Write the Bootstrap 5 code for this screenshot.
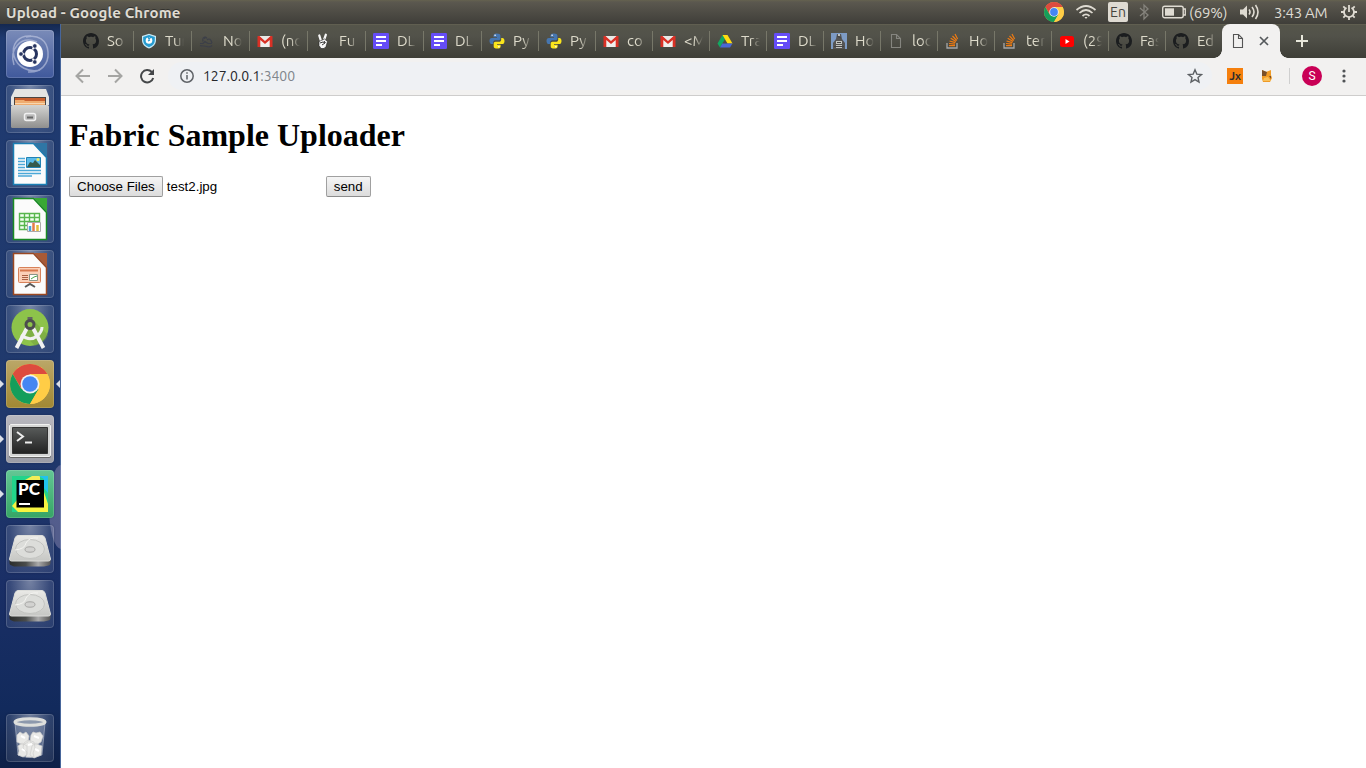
<!DOCTYPE html>
<html lang="en">
<head>
<meta charset="utf-8">
<title>Upload</title>
<link rel="stylesheet" href="https://cdn.jsdelivr.net/npm/bootstrap@5.3.0/dist/css/bootstrap.min.css">
<style>
body{font-family:Ubuntu,"Noto Sans",sans-serif;font-size:15px;line-height:1;overflow:hidden;background:#fff}
svg{display:block;flex:none}
.panel{height:24px;background:linear-gradient(#65624f 0,#5b584f 2px,#3f3e39);color:#dfdbd2;padding:0 6px}
.panel-title{font-weight:700;font-size:15px;letter-spacing:.15px;text-shadow:0 -1px #33322e;white-space:nowrap}
.panel .lang{width:20px;height:20px;background:#dfdbd2;color:#45443f;border-radius:2px;font-size:14px}
.launcher{width:61px;padding:6px 0 6px 6px;background:linear-gradient(#142850 0,#1f3a70 14px,#20396c 55%,#1a2f66 75%,#122a5c 92%,#0e2047);border-right:1px solid #47669b;gap:7px}
.glow{left:49px;top:441px;width:12px;height:84px;border-radius:12px 0 0 12px/42px 0 0 42px;background:#9a93bb70}
.tile{width:48px;height:48px;border-radius:4px;background:radial-gradient(ellipse at 50% 0,#ffffff66,#ffffff20 60%,#ffffff14);box-shadow:inset 0 0 0 1px #ffffff28,0 0 2px #0a173870}
.tile.dash{background:linear-gradient(#7a8bb8,#40599c)}
.tile.gold{background:linear-gradient(#bba768,#a18833)}
.tile.silver{background:linear-gradient(#b8b8be,#9b9ca5)}
.tile.green{background:linear-gradient(#63c795,#36a565)}
.pip{top:20px;width:0;height:0;border:4px solid transparent}
.pip-l{left:-6px;border-left-color:#dce0e8;border-right:0}
.pip-r{right:-6px;border-right-color:#dce0e8;border-left:0}
.strip{height:34px;padding-left:14px;background:linear-gradient(#6b6857 0,#55554a 1px,#52524a 12px,#3e3e37)}
.tab{width:57px;height:34px;padding-left:8px;gap:8px;position:relative}
.tab.wide{width:58px}
.tab::after{content:"";width:1px;height:20px;background:#777769;position:absolute;right:-1px;top:7px;z-index:1}
.tab.last::after{display:none}
.tab span{width:19px;overflow:hidden;white-space:nowrap;line-height:20px;color:#dedbcb;-webkit-mask-image:linear-gradient(90deg,#000 50%,transparent);mask-image:linear-gradient(90deg,#000 50%,transparent)}
.tab-on{width:58px;height:34px;background:#f2f1f0;border-radius:8px 8px 0 0;padding:0 9px 0 8px;position:relative}
.tab-on::before,.tab-on::after{content:"";position:absolute;bottom:0;width:8px;height:8px}
.tab-on::before{left:-8px;background:radial-gradient(circle at 0 0,transparent 7.5px,#f2f1f0 8px)}
.tab-on::after{right:-8px;background:radial-gradient(circle at 100% 0,transparent 7.5px,#f2f1f0 8px)}
.toolbar{height:38px;background:#f2f1f0;border-bottom:1px solid #cecdcc;padding:0 14px 1px}
.omni{height:28px;margin-left:13px;width:1044px;border-radius:14px;background:#eff1f4;padding:0 9px 0 12px}
.url{font-size:14px;letter-spacing:-.05px;color:#25272b;margin-left:9px;line-height:20px}
.url i{font-style:normal;color:#80868b}
.jx{width:16px;height:16px;background:#f57f0c;color:#2b2b2b;font-size:11px;font-weight:700}
.avatar{width:20px;height:20px;background:#c90056;color:#fff;font:12px Roboto,sans-serif}
.page{padding:21px 8px;color:#000}
.page h1{font:bold 32px/37px "Liberation Serif",serif;margin:0 0 22px}
.frm{font:13.333px/15px "Liberation Sans",sans-serif;height:21px}
.old{height:21px;padding:0 7px;border:1px solid #a0a0a0;border-bottom-color:#8c8c8c;border-radius:2px;background:linear-gradient(#f5f5f5,#dcdcdc);font:inherit;color:#000}
.fname{width:159px;padding-left:4px}
</style>
</head>
<body class="vh-100 d-flex flex-column">
<svg width="0" height="0" class="position-absolute">
<defs>
<linearGradient id="hdd" x1="0" y1="0" x2="0" y2="1"><stop stop-color="#e9e9e6"/><stop offset="1" stop-color="#c6c7c4"/></linearGradient>
<linearGradient id="scr" x1="0" y1="0" x2="0" y2="1"><stop stop-color="#585b5a"/><stop offset="1" stop-color="#222"/></linearGradient>
<linearGradient id="cab" x1="0" y1="0" x2="0" y2="1"><stop stop-color="#d4d4d2"/><stop offset="1" stop-color="#8f8f8e"/></linearGradient>
<linearGradient id="edge"><stop stop-color="#2b2d2c"/><stop offset=".4" stop-color="#4a4c4b"/><stop offset=".7" stop-color="#aaa"/><stop offset="1" stop-color="#555"/></linearGradient>
<symbol id="github" viewBox="0 0 16 16"><path fill="#1b1d1f" d="M8 0C3.58 0 0 3.58 0 8c0 3.54 2.29 6.53 5.47 7.59.4.07.55-.17.55-.38 0-.19-.01-.82-.01-1.49-2.01.37-2.53-.49-2.69-.94-.09-.23-.48-.94-.82-1.13-.28-.15-.68-.52-.01-.53.63-.01 1.08.58 1.23.82.72 1.21 1.87.87 2.33.66.07-.52.28-.87.51-1.07-1.78-.2-3.64-.89-3.64-3.95 0-.87.31-1.59.82-2.15-.08-.2-.36-1.02.08-2.12 0 0 .67-.21 2.2.82.64-.18 1.32-.27 2-.27s1.36.09 2 .27c1.53-1.04 2.2-.82 2.2-.82.44 1.1.16 1.92.08 2.12.51.56.82 1.27.82 2.15 0 3.07-1.87 3.75-3.65 3.95.29.25.54.73.54 1.48 0 1.07-.01 1.93-.01 2.2 0 .21.15.46.55.38A8 8 0 0 0 16 8c0-4.42-3.58-8-8-8"/></symbol>
<symbol id="shield" viewBox="0 0 16 16"><path fill="#c8e9f5" d="M8 .7 15 3v4c0 4.500-3 7-7 8.500C4 14 1 11.500 1 7V3z"/><path fill="#259bd0" d="M8 2l5.800 2v3c0 3.600-2.400 5.700-5.800 7.200C4.600 12.700 2.200 10.600 2.200 7V4z"/><circle cx="8" cy="7.500" r="3.300" fill="#fff"/><path d="m7 4 1 2 2-2M7 8l2-1" stroke="#259bd0" stroke-width="1.300" fill="none"/></symbol>
<symbol id="bird" viewBox="0 0 16 16"><path d="M1 12.500c2 1 5 0 7 1s4 0 5-1M4 8.500c-1-4 2-6 4-3M8 7c2-2 4-1 5 3M1 10.500h3l2-2 3 2h4M5 4l1 2" fill="none" stroke="#3c3f48" stroke-width="1.200"/></symbol>
<symbol id="gmail" viewBox="0 0 16 16"><path fill="#efefed" d="M1 3h14v11H1z"/><path fill="#d93025" d="M1 3h1.500L8 8l5.500-5H15a.5.500 0 0 1 .5.500V14H12.700V7L8 11 3.300 7v7H.5V3.500A.5.500 0 0 1 1 3"/><path fill="#e8e8e6" d="M3.300 2.900h9.400L8 7.200z"/></symbol>
<symbol id="victory" viewBox="0 0 16 16"><path d="M6 8 4.300 2.500M8.800 7.500 10.800 1.800" stroke="#f7f7f7" stroke-width="2.300" stroke-linecap="round"/><path fill="#f7f7f7" stroke="#222" stroke-width=".6" d="M4 8.500 9.500 6l3 2.500-1.500 5-2 2H6l-2-3z"/><path d="m5 10 3-1 2 1-3 2M9 8l1.500 2" fill="none" stroke="#222" stroke-width=".9"/></symbol>
<symbol id="doc" viewBox="0 0 16 16"><rect width="16" height="16" rx="1.300" fill="#654cf7"/><path d="M3 4h10M3 8h10M3 12h6" stroke="#fff" stroke-width="2"/></symbol>
<symbol id="python" viewBox="0 0 16 16"><path fill="#4676b0" d="M7.700.4C5 .4 4.500 1.500 4.500 2.600v1.700H8v.6H2.900C1.300 4.900.5 6.100.5 8s1 3.100 2.200 3.100h1.500V9.300c0-1.200 1-2 2-2h3.500c1 0 1.700-.8 1.700-1.700v-3C11.400 1.100 10.200.4 7.700.4"/><circle cx="6.100" cy="2.300" r=".8" fill="#fff"/><path fill="#fbe51c" d="M8.300 15.600c2.700 0 3.300-1.100 3.300-2.200v-1.700H8v-.6h5.200c1.500 0 2.300-1.200 2.300-3.100s-.9-3.100-2.200-3.100h-1.100v1.800c0 1.200-1 2.100-2 2.100H6.400c-1 0-1.700.8-1.700 1.700v3c0 1.400 1.200 2.100 3.600 2.100"/><circle cx="9.900" cy="13.700" r=".8" fill="#fff"/></symbol>
<symbol id="drive" viewBox="0 0 16 16"><path fill="#11a861" d="M5.500 2 .5 10.600 3 14.500 8 6z"/><path fill="#ffdc10" d="M5.500 2h5l5 8.500h-5z"/><path fill="#4968d5" d="M5.300 10.500h10.200L13 14.500H3z"/></symbol>
<symbol id="photo" viewBox="0 0 16 16"><path fill="#7d9bc5" d="M0 0h16v16H0z"/><path fill="#555" d="M6 1h4l1 5 3 4v6H2v-6l3-4z"/><path fill="#c2c4c0" d="M7 1h2v2H7zM5 8h6v3H5zm0 4h6v3H5z"/><path stroke="#444" d="M6 3l4 2M6 9.500h4M3 13.500h10"/></symbol>
<symbol id="file" viewBox="0 0 16 16"><path d="M3.500 1.500h5l4 4v9h-9zM8.500 1.500v4h4" fill="none" stroke="currentColor" stroke-width="1.100"/></symbol>
<symbol id="stack" viewBox="0 0 16 16"><path d="M2 10v5h10v-5" fill="none" stroke="#a5a7a8" stroke-width="1.300"/><path d="M4 12.700h6M4 10.500l6 .7M4.500 8l5.900 1.700M5.700 5.300 11 8.400M7.500 3l4.300 4.500M10 1l2.600 5" stroke="#ef7b12" stroke-width="1.200"/></symbol>
<symbol id="yt" viewBox="0 0 16 16"><rect x="1" y="3" width="14" height="11" rx="2.500" fill="#f00"/><path fill="#fff" d="m6.500 6 4 2.500-4 2.500z"/></symbol>
<symbol id="chrome" viewBox="0 0 48 48"><circle cx="24" cy="24" r="20" fill="#ffcd46"/><path fill="#dd4b3e" d="M24 14h17.300A20 20 0 0 0 6.700 14L15.500 29z"/><path fill="#149e5b" d="M6.700 14A20 20 0 0 0 24 44l8.700-15H15.300z"/><path fill="#ffcd46" d="M24 44a20 20 0 0 0 17.300-30H24l8.700 15z"/><circle cx="24" cy="24" r="9.500" fill="#f1f1f1"/><circle cx="24" cy="24" r="7.800" fill="#4586f2"/></symbol>
<symbol id="disk" viewBox="0 0 48 48"><path fill="url(#edge)" d="M3.500 34h41v4q0 2-2 2.500L38 41.500H8L4.500 40q-1-.5-1-2z"/><path fill="url(#hdd)" stroke="#dcddda" d="M12 10.500h24q2 0 3 2.500l5.500 21q0 2-2 2h-37q-2 0-2-2L9 13q1-2.500 3-2.500"/><ellipse cx="24" cy="24" rx="14.500" ry="9.500" fill="#dcddda" stroke="#c3c4c1"/><ellipse cx="24" cy="24.500" rx="5" ry="2.700" fill="#d2d2d0" stroke="#a5a5a3"/><path d="M9 25q10-1 11-7 3-6 12-5" stroke="#f4f4f1" fill="none"/></symbol>
</defs>
</svg>

<header class="panel d-flex align-items-center justify-content-between">
 <div class="panel-title">Upload - Google Chrome</div>
 <div class="d-flex align-items-center">
  <svg width="24" height="24" style="margin-right:9px"><use href="#chrome"/></svg>
  <svg width="22" height="16" viewBox="0 0 22 16" fill="none" stroke="#dfdbd2" stroke-width="1.700"><path d="M1.500 6q9.500-8 19 0M4.500 9q6.500-6 13 0M7.500 12q3.500-3.200 7 0"/><path d="m9.500 13 1.500 2 1.500-2z" fill="#dfdbd2" stroke="none"/></svg>
  <div class="lang d-flex align-items-center justify-content-center" style="margin-left:11px">En</div>
  <svg width="10" height="18" viewBox="0 0 10 18" style="margin:0 13px 0 11px" fill="none" stroke="#85837c" stroke-width="1.300"><path d="m1 5 8 7-4 4V2l4 4-8 7"/></svg>
  <svg width="24" height="14" viewBox="0 0 24 14"><rect x=".7" y="1.200" width="20.500" height="11.600" rx="2" fill="none" stroke="#dfdbd2" stroke-width="1.400"/><path fill="#dfdbd2" d="M3 3.300h9v7.400H3z"/><path d="M21 4h2.300v6H21" fill="none" stroke="#dfdbd2" stroke-width="1.300"/></svg>
  <div style="margin-left:3px;width:39px;white-space:nowrap;letter-spacing:-.1px">(69%)</div>
  <svg width="21" height="16" viewBox="0 0 21 16" style="margin:0 14px 0 11px" fill="none" stroke="#dfdbd2" stroke-width="1.600"><path d="M1 5.500h3l4-4v13l-4-4H1z" fill="#dfdbd2" stroke="none"/><path d="M10 5.500q2 2.500 0 5M13 3q4 5 0 10M16.500 1q5 7 0 14"/></svg>
  <div style="width:55px;white-space:nowrap;letter-spacing:-.3px">3:43 AM</div>
  <svg width="18" height="18" viewBox="0 0 18 18" style="margin:0 2px 0 11px" fill="none" stroke="#dfdbd2" stroke-width="1.800"><path d="M6.500 4.700a5 5 0 1 0 5 0M9 2v7"/><path d="M1 9h3M14 9h3M3.300 3.300l2 2M14.700 3.300l-2 2M3.300 14.700l2-2M14.700 14.700l-2-2M9 14v3"/></svg>
 </div>
</header>

<div class="d-flex flex-grow-1 position-relative">
<nav class="launcher d-flex flex-column flex-shrink-0">
 <div class="glow position-absolute"></div>
 <div class="tile dash position-relative"><svg width="48" height="48" fill="none"><path d="M25 6C12 5 5 15 8 26s15 17 26 14M22 42c13 1 21-8 20-20S32 4 20 7M8 35C3 20 14 5 31 12" stroke="#c4cce4" stroke-width="1.500" opacity=".6"/><circle cx="24" cy="24" r="13" fill="#fff"/><circle cx="24" cy="24" r="6.500" stroke="#27345f" stroke-width="3"/><path d="M18.500 24H13M26.500 19.500l3-5M26.500 28.500l3 5" stroke="#fff" stroke-width="1.500"/><g fill="#27345f" stroke="#fff" stroke-width=".8"><circle cx="15" cy="24" r="2.300"/><circle cx="28.800" cy="16" r="2.300"/><circle cx="28.800" cy="32" r="2.300"/></g></svg></div>
 <div class="tile position-relative"><svg width="48" height="48"><path fill="#e4e4e2" d="M9 4h31l3 8v8H5v-8z"/><path fill="#4b4440" d="M8 12h32v10H8z"/><path fill="#c95f2d" d="M9 13h30v8H9z"/><path fill="#efac70" d="M9 15h9l1 1h20v4H9z"/><path stroke="#f8d6ae" d="M9 18.500h30"/><rect x="5" y="20" width="38" height="23" rx="1.500" fill="url(#cab)"/><rect x="18.500" y="28.500" width="11" height="7" rx="2" fill="#bbb" stroke="#f0f0f0" stroke-width="1.500"/><path d="M21 32.500h6" stroke="#666" stroke-width="2"/></svg></div>
 <div class="tile position-relative"><svg width="48" height="48"><path fill="#fbfbfb" stroke="#1b7fb4" stroke-width="1.500" d="M7.500 3.500h20l13 14v27h-33z"/><path fill="#2f76a5" d="M28 3h13v14z"/><path d="M12 18.500h7M12 21.500h7M12 24.500h7M12 27.500h7M12 30.500h23M12 33.500h23M12 36h14" stroke="#4ba8d8" stroke-width="1.300"/><path fill="#5bbbea" stroke="#2383b3" d="M20.500 17.500h14v10h-14z"/><path fill="#365b4c" d="m21 27 3-5 3 1 2-3 5 5v2z"/><circle cx="32" cy="19.500" r="1.500" fill="#ebee65"/></svg></div>
 <div class="tile position-relative"><svg width="48" height="48"><path fill="#fbfbfb" stroke="#188b22" stroke-width="1.500" d="M7.500 3.500h20l13 14v27h-33z"/><path fill="#39a935" d="M28 3h13v14z"/><path fill="#f1fff0" stroke="#57b54e" stroke-width="1.400" d="M13.500 18.500h20v16h-20zM13.500 22.500h20M13.500 26.500h20M13.500 30.500h20M18.500 18.500v16M23.500 18.500v16M28.500 18.500v16"/><path fill="#fff" stroke="#aaa" d="M21.500 27.500h13v9h-13z"/><path d="M24 36v-5" stroke="#48a4db" stroke-width="2.500"/><path d="M27.500 36v-8" stroke="#e57c47" stroke-width="2.500"/><path d="M31.500 36v-6" stroke="#e2bd39" stroke-width="2.500"/></svg></div>
 <div class="tile position-relative"><svg width="48" height="48"><path fill="#fbfbfb" stroke="#9b4821" stroke-width="1.500" d="M7.500 3.500h20l13 14v27h-33z"/><path fill="#a95a36" d="M28 3h13v14z"/><rect x="12.500" y="17.500" width="22" height="15" rx="1" fill="#fbd0b8" stroke="#d78159"/><path d="M14 20.500h18" stroke="#d6784e" stroke-width="2"/><path d="M16 25.500h6M16 27.500h6M16 29.500h6" stroke="#a96043"/><path fill="#fff" stroke="#8a9589" d="M23.500 24.500h8v6h-8z"/><path d="m25 29 3-2 3-1" stroke="#47a64a" fill="none"/><path d="m19 37 5-3 5 3" fill="none" stroke="#585858" stroke-width="2"/></svg></div>
 <div class="tile position-relative"><svg width="48" height="48"><circle cx="24" cy="22.500" r="18.500" fill="#8dc34a"/><path fill="#719e3e" opacity=".5" d="m28 16 14 14q-3 8-13 11L17 28z"/><path d="M24 17v-5" stroke="#626262" stroke-width="5"/><path d="m21 23-10.500 20M27 23l10.500 20" stroke="#f1f1f1" stroke-width="3.800"/><path d="M15 30q9 7 16 1 5-4 5-9" fill="none" stroke="#f1f1f1" stroke-width="3"/><circle cx="24" cy="19.500" r="4" fill="#8dc34a" stroke="#4c4d4e" stroke-width="3"/></svg></div>
 <div class="tile gold position-relative"><i class="pip pip-l position-absolute"></i><i class="pip pip-r position-absolute"></i><svg width="48" height="48"><use href="#chrome"/></svg></div>
 <div class="tile silver position-relative"><i class="pip pip-l position-absolute"></i><svg width="48" height="48"><rect x="3" y="9" width="42" height="34" rx="2" fill="#666"/><rect x="3.500" y="9.500" width="41" height="32" rx="1.500" fill="#d4d5d4" stroke="#f1f1f0"/><path fill="url(#scr)" stroke="#333" d="M6.500 12.500h35v26h-35z"/><path d="m11 17 6 4.500-6 4.500M19 27.500h7" fill="none" stroke="#eee" stroke-width="2"/></svg></div>
 <div class="tile green position-relative"><i class="pip pip-l position-absolute"></i><svg width="48" height="48"><path fill="#22d48b" d="M6 6h36v36H6z"/><path fill="#f7f440" d="m6 36 5-6h27v-8l4 12v8H12z"/><path fill="#f2ee58" d="m19 10 7-4h8v4z"/><path fill="#20c3ef" d="M33 6h9v17l-4-5V9z"/><path fill="#000" d="M10.500 10H38v27.500H10.500z"/><text x="12" y="25" fill="#fff" font-family="Lato,sans-serif" font-weight="900" font-size="16" textLength="22" lengthAdjust="spacingAndGlyphs">PC</text><path d="M13 34h11" stroke="#fff" stroke-width="2"/></svg></div>
 <div class="tile position-relative"><svg width="48" height="48"><use href="#disk"/></svg></div>
 <div class="tile position-relative"><svg width="48" height="48"><use href="#disk"/></svg></div>
 <div class="tile position-relative mt-auto"><svg width="48" height="48"><path fill="#b9c5dc55" stroke="#cbd2df80" d="m9 9 3 32q12 5 24 0l3-32"/><g fill="#e9e9e7" stroke="#cfcfcd" stroke-width=".7"><path d="m11 21 3-3 3 2 3-2 3 4-1 6-5 3-6-3zM25 21l2-3 3 1 4-1 3 4-2 6-5 3-6-3zM12 32l4-3 5 3v9l-4 2-5-2 1-4zM26 32l4-3 3 2 3 1-1 9-7 3-4-3zM18 29l4-3 6 2 1 6-2 5 1 4h-8l1-5-4-4z"/></g><path d="m15 22 4 2M28 22l5 2M16 35l3 2M29 35l4 2M22 31l4-1" stroke="#fff" stroke-width="2"/><ellipse cx="24" cy="8" rx="15" ry="3.300" fill="#8d99ad" stroke="#dedfdc" stroke-width="3"/></svg></div>
</nav>

<main class="flex-grow-1 overflow-hidden">
 <div class="strip d-flex align-items-center">
  <div class="tab wide d-flex align-items-center"><svg width="16" height="16"><use href="#github"/></svg><span>So</span></div>
  <div class="tab wide d-flex align-items-center"><svg width="16" height="16"><use href="#shield"/></svg><span>Tur</span></div>
  <div class="tab wide d-flex align-items-center"><svg width="16" height="16"><use href="#bird"/></svg><span>No</span></div>
  <div class="tab wide d-flex align-items-center"><svg width="16" height="16"><use href="#gmail"/></svg><span>(no</span></div>
  <div class="tab wide d-flex align-items-center"><svg width="16" height="16"><use href="#victory"/></svg><span>Fu</span></div>
  <div class="tab wide d-flex align-items-center"><svg width="16" height="16"><use href="#doc"/></svg><span>DL</span></div>
  <div class="tab wide d-flex align-items-center"><svg width="16" height="16"><use href="#doc"/></svg><span>DL</span></div>
  <div class="tab d-flex align-items-center"><svg width="16" height="16"><use href="#python"/></svg><span>Py</span></div>
  <div class="tab d-flex align-items-center"><svg width="16" height="16"><use href="#python"/></svg><span>Py</span></div>
  <div class="tab d-flex align-items-center"><svg width="16" height="16"><use href="#gmail"/></svg><span>co</span></div>
  <div class="tab d-flex align-items-center"><svg width="16" height="16"><use href="#gmail"/></svg><span>&lt;M</span></div>
  <div class="tab d-flex align-items-center"><svg width="16" height="16"><use href="#drive"/></svg><span>Tra</span></div>
  <div class="tab d-flex align-items-center"><svg width="16" height="16"><use href="#doc"/></svg><span>DL</span></div>
  <div class="tab d-flex align-items-center"><svg width="16" height="16"><use href="#photo"/></svg><span>Ho</span></div>
  <div class="tab d-flex align-items-center" style="color:#85857f"><svg width="16" height="16"><use href="#file"/></svg><span>loc</span></div>
  <div class="tab d-flex align-items-center"><svg width="16" height="16"><use href="#stack"/></svg><span>Ho</span></div>
  <div class="tab d-flex align-items-center"><svg width="16" height="16"><use href="#stack"/></svg><span>ter</span></div>
  <div class="tab d-flex align-items-center"><svg width="16" height="16"><use href="#yt"/></svg><span>(29</span></div>
  <div class="tab d-flex align-items-center"><svg width="16" height="16"><use href="#github"/></svg><span>Fas</span></div>
  <div class="tab last d-flex align-items-center"><svg width="16" height="16"><use href="#github"/></svg><span>Ed</span></div>
  <div class="tab-on d-flex align-items-center justify-content-between" style="color:#555"><svg width="16" height="16"><use href="#file"/></svg><svg width="14" height="14" stroke="#55595c" stroke-width="1.700"><path d="m3 3 8 8M11 3l-8 8"/></svg></div>
  <svg width="14" height="14" style="margin-left:15px" stroke="#e8e7db" stroke-width="2"><path d="M7 1v12M1 7h12"/></svg>
 </div>
 <div class="toolbar d-flex align-items-center">
  <svg width="16" height="16" fill="none" stroke="#a5a5a3" stroke-width="2"><path d="M15 8H2M8 1.500 1.500 8 8 14.500"/></svg>
  <svg width="16" height="16" class="ms-3" fill="none" stroke="#a5a5a3" stroke-width="2"><path d="M1 8h13M8 1.500 14.500 8 8 14.500"/></svg>
  <svg width="16" height="16" class="ms-3" fill="none" stroke="#454749" stroke-width="2"><path d="M12.800 4A6.200 6.200 0 1 0 14.200 10"/><path d="M15 1v6H9z" fill="#454749" stroke="none"/></svg>
  <div class="omni d-flex align-items-center">
   <svg width="14" height="14" fill="none" stroke="#5f6368" stroke-width="1.500"><circle cx="7" cy="7" r="6.200"/><path d="M7 6v4.500M7 3.200v1.600"/></svg>
   <div class="url">127.0.0.1<i>:3400</i></div>
   <svg width="16" height="16" class="ms-auto" fill="none" stroke="#5c6064" stroke-width="1.400"><path d="m8 1.800 1.800 4.300 4.700.4-3.500 3 1 4.500-4-2.400L4 14l1-4.500-3.500-3 4.700-.4z"/></svg>
  </div>
  <div class="jx d-flex align-items-center justify-content-center" style="margin-left:15px">Jx</div>
  <svg width="16" height="16" class="ms-3"><path fill="#ef9b27" d="M3 2l4 2 5-2v5l1 3-2 4H4l-1-3z"/><path fill="#79502a" d="m3 2 5 2-1 4H3zM10 8h2v3z"/><path fill="#f8c05b" d="m5 10 4-1 3 4H4z"/></svg>
  <div style="width:1px;height:16px;background:#cfcfcf;margin:0 12px 0 14px"></div>
  <div class="avatar rounded-circle d-flex align-items-center justify-content-center">S</div>
  <svg width="4" height="16" style="margin-left:20px" fill="#505356"><circle cx="2" cy="3" r="1.600"/><circle cx="2" cy="8" r="1.600"/><circle cx="2" cy="13" r="1.600"/></svg>
 </div>
 <section class="page">
  <h1>Fabric Sample Uploader</h1>
  <form class="frm d-flex align-items-center">
   <button type="button" class="old">Choose Files</button><span class="fname">test2.jpg</span><span style="width:4px"></span><button type="button" class="old">send</button>
  </form>
 </section>
</main>
</div>
<script src="https://cdn.jsdelivr.net/npm/bootstrap@5.3.0/dist/js/bootstrap.bundle.min.js"></script>
</body>
</html>
